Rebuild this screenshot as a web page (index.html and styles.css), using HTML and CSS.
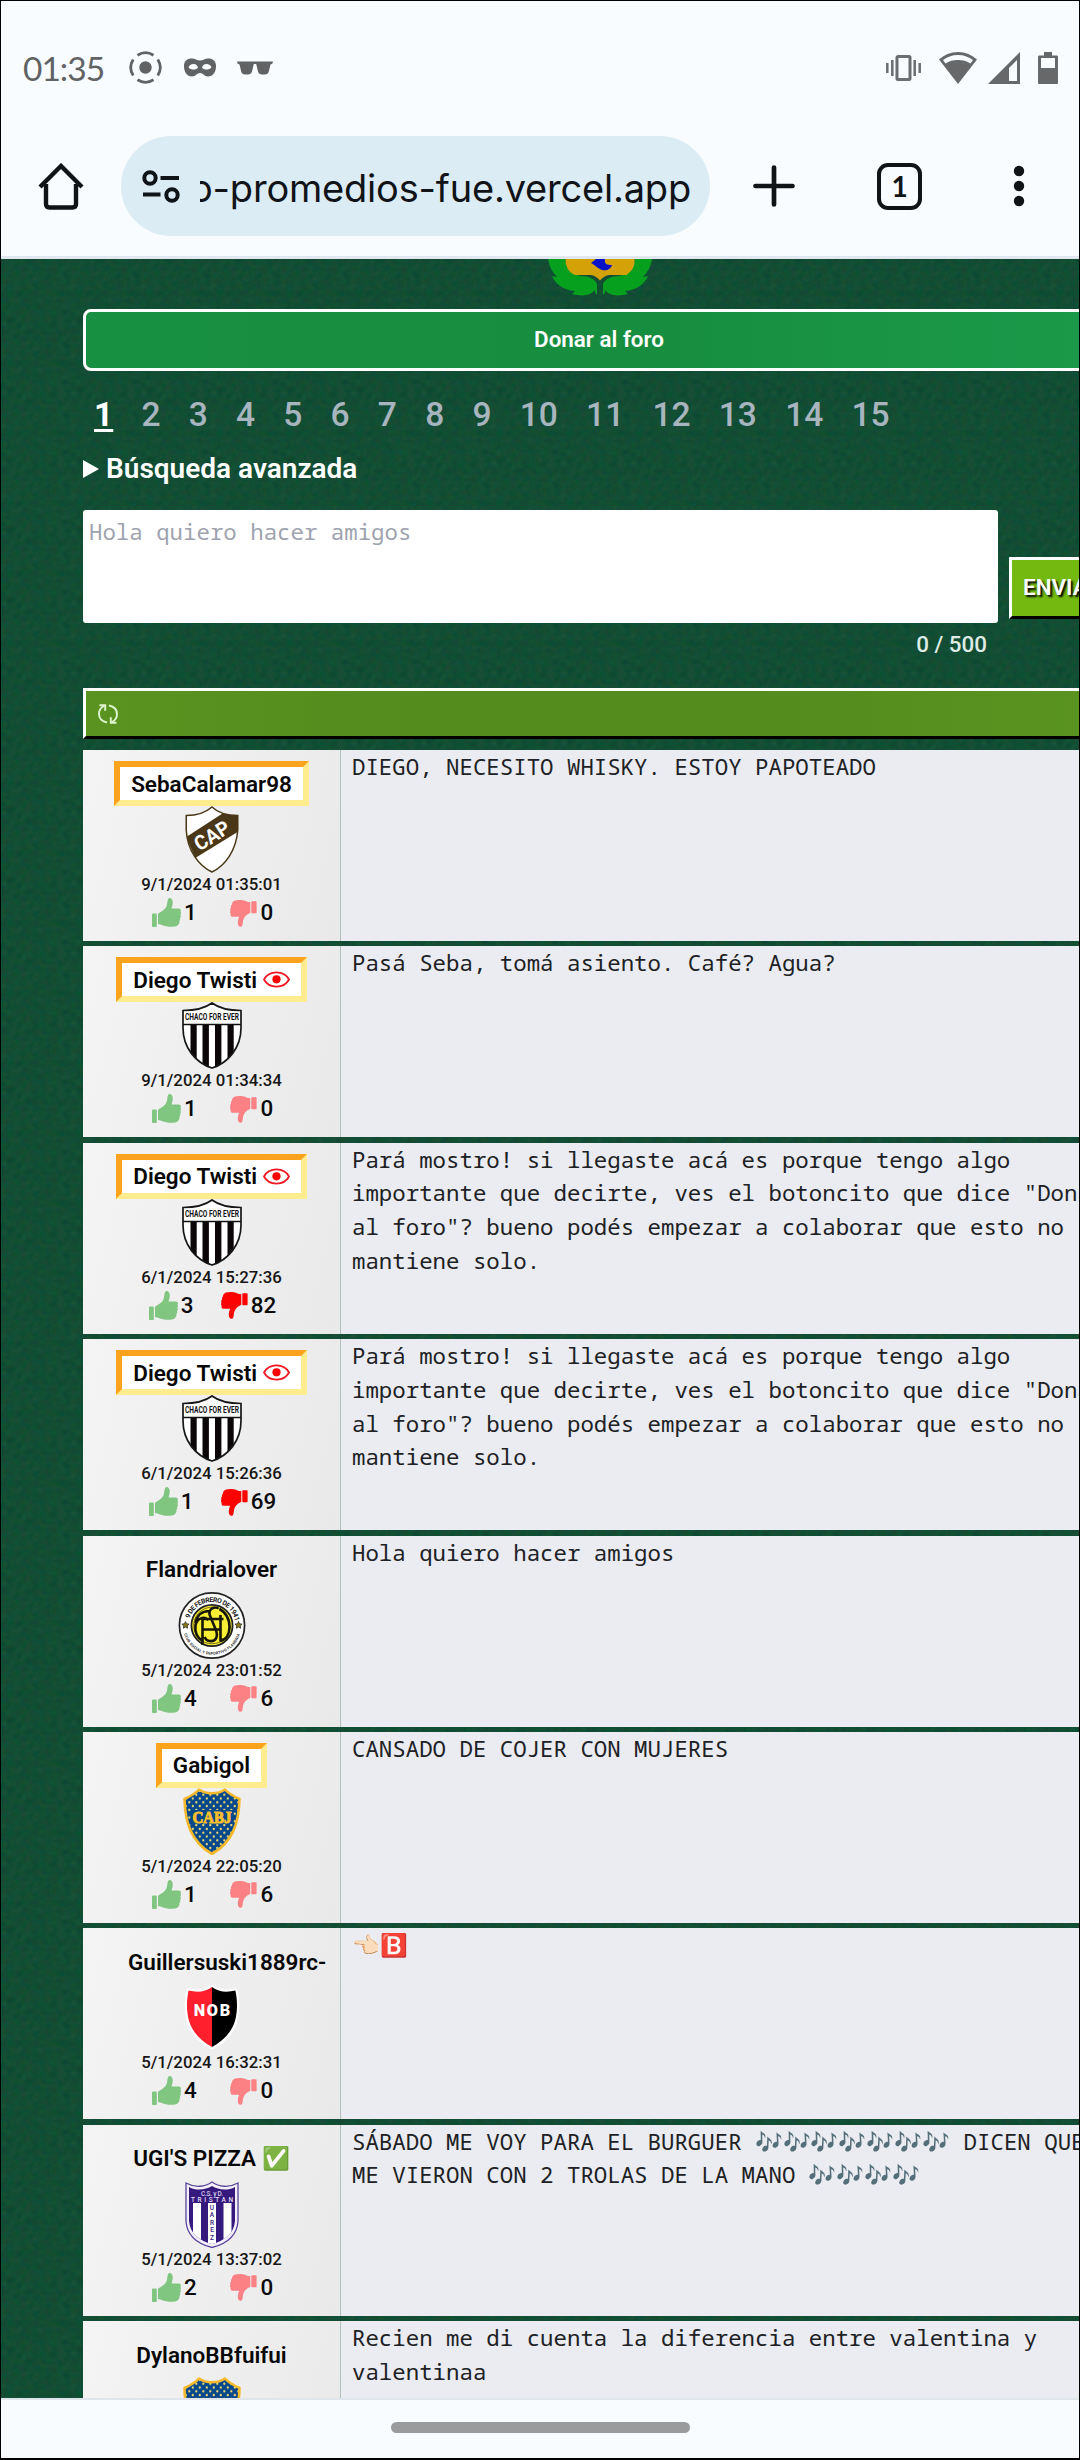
FILE: index.html
```html
<!DOCTYPE html>
<html lang="es">
<head>
<meta charset="utf-8">
<title>Foro promedios</title>
<link rel="stylesheet" href="styles.css">
</head>
<body>
<svg class="defs" aria-hidden="true">
  <defs>
    <pattern id="stars-a" x="1" y="1" width="7" height="7.600" patternUnits="userSpaceOnUse"><rect width="7" height="7.600" fill="#07488a"/><circle cx="1.800" cy="1.900" r="1.150" fill="#ecdb74"/><circle cx="5.300" cy="5.700" r="1.150" fill="#ecdb74"/></pattern>
    <clipPath id="cap-clip"><path d="M26.7 1C20 7 10 9.500 1 9.500V24C2 45 14 60 26.700 66 39.500 60 51 45 52.500 24V9.500C43 9.500 33 7 26.700 1z"/></clipPath>
    <clipPath id="chaco-clip"><path d="M30 1C22 7 12 8.500 1 8.500V26C1 46 14 61 30 66 46 61 59 46 59 26V8.500C48 8.500 38 7 30 1z"/></clipPath>
    <clipPath id="nob-clip"><path d="M27 3C21 8 12 8.500 4 6.500 2 15 1.500 26 4.500 37 8 48 17 57 27 62 37 57 46 48 49.500 37 52.500 26 52 15 50 6.500 42 8.500 33 8 27 3z"/></clipPath>
    <clipPath id="tri-clip"><path d="M27 5C21 9 11 10 4 6V40C5 53 15 60 27 63 39 60 49 53 50 40V6C43 10 33 9 27 5z"/></clipPath>
    <symbol id="crest-cap" viewBox="0 0 53.500 67">
      <g clip-path="url(#cap-clip)"><path fill="#fff" d="M0 0h54v67H0z"/><path fill="#4a3717" d="M1 31 38 7l16-2v20L10 52z"/></g>
      <path d="M26.700 1C20 7 10 9.500 1 9.500V24C2 45 14 60 26.700 66 39.500 60 51 45 52.500 24V9.500C43 9.500 33 7 26.700 1z" fill="none" stroke="#4a3717" stroke-width="1.500"/>
      <text x="27" y="36.500" transform="rotate(-32 27 30)" text-anchor="middle" textLength="38" lengthAdjust="spacingAndGlyphs" class="ct" font-size="20" fill="#fff">CAP</text>
    </symbol>
    <symbol id="crest-chaco" viewBox="0 0 60 67">
      <g clip-path="url(#chaco-clip)"><path fill="#fff" d="M0 0h60v67H0z"/><path d="M8.500 23h6.200v44H8.500zM20.500 23h6.400v44h-6.400zM33 23h6.400v44H33zM45.500 23h6.200v44h-6.200z" fill="#0b0608"/></g>
      <path d="M1 22.500h58" stroke="#111" stroke-width="1.600"/>
      <path d="M30 1C22 7 12 8.500 1 8.500V26C1 46 14 61 30 66 46 61 59 46 59 26V8.500C48 8.500 38 7 30 1z" fill="none" stroke="#161616" stroke-width="1.700"/>
      <text x="30" y="18.300" text-anchor="middle" textLength="54" lengthAdjust="spacingAndGlyphs" class="ct" font-size="9" fill="#111">CHACO FOR EVER</text>
    </symbol>
    <symbol id="crest-flandria" viewBox="0 0 67 67">
      <circle cx="33.500" cy="33.500" r="32.600" fill="#fff" stroke="#222" stroke-width="1.700"/>
      <path id="fl-top" d="M10 33.500a23.500 23.500 0 0 1 47 0" fill="none"/><path id="fl-bot" d="M4.500 37a29.200 29.200 0 0 0 58 0" fill="none"/>
      <text class="ct" font-size="6.800" fill="#222"><textPath href="#fl-top" startOffset="7" textLength="62">9 DE FEBRERO DE 1941</textPath></text>
      <text class="ct" font-size="3.900" fill="#333"><textPath href="#fl-bot" startOffset="5" textLength="74">CLUB SOCIAL Y DEPORTIVO FLANDRIA</textPath></text>
      <circle cx="33.500" cy="33.500" r="20.600" fill="#f8ee35" stroke="#222" stroke-width="1.800"/>
      <circle cx="33.500" cy="33.500" r="18.300" fill="none" stroke="#5b5414" stroke-width=".8"/>
      <path d="M24 53V27h21M24 37.500h18M42 23v26M30 28c-5-4-11-2-13 5-1 8 2 13 7 16M41 49c7-1 10-7 10-14 0-8-4-15-10-18M40 16c-7-2-11 3-8 9l5 12c3 7 1 13-6 12-3 0-4-2-5-4M31 19c-8 0-13 5-14 12" fill="none" stroke="#171608" stroke-width="2.600"/>
      <path d="m7 29.500 1.100 2.300 2.500.3-1.900 1.700.5 2.500L7 35.100l-2.200 1.200.5-2.500-1.900-1.700 2.500-.3zM60 29.500l1.100 2.300 2.500.3-1.900 1.700.5 2.500-2.200-1.200-2.200 1.200.5-2.500-1.900-1.700 2.500-.3z" fill="#8a7a16" stroke="#222" stroke-width=".7"/>
    </symbol>
    <symbol id="crest-boca" viewBox="0 0 58 67">
      <path d="M16 1.500C23 6.500 35 6.500 42 1.500 46 6 51 8.500 56.500 11 56 34 50 54 29 66 8 54 2 34 1.500 11 7 8.500 12 6 16 1.500z" fill="url(#stars-a)" stroke="#f6b92b" stroke-width="2.600" stroke-linejoin="round"/>
      <path d="M8 22h42v14H8z" fill="#07488a"/>
      <text x="29" y="34.500" text-anchor="middle" textLength="39" lengthAdjust="spacingAndGlyphs" class="slab" font-size="16.500" fill="#fbc02d" stroke="#fbc02d" stroke-width="1">CABJ</text>
    </symbol>
    <symbol id="crest-nob" viewBox="0 0 54 66">
      <path d="M27 3C21 8 12 8.500 4 6.500 2 15 1.500 26 4.500 37 8 48 17 57 27 62 37 57 46 48 49.500 37 52.500 26 52 15 50 6.500 42 8.500 33 8 27 3z" fill="#fff" stroke="#fff" stroke-width="4.500" stroke-linejoin="round"/>
      <g clip-path="url(#nob-clip)"><path fill="#ff1f2d" d="M0 0h27v66H0z"/><path d="M27 0h27v66H27z"/></g>
      <text x="27" y="32" text-anchor="middle" textLength="36" class="ct black" font-size="16" fill="#fff">NOB</text>
    </symbol>
    <symbol id="crest-tristan" viewBox="0 0 54 67">
      <path d="M27 1C20 6 10 7 1 2V40C2 56 13 63 27 66.500 41 63 52 56 53 40V2C44 7 34 6 27 1z" fill="#f4f0fa" stroke="#59439a" stroke-width="1.300"/>
      <g clip-path="url(#tri-clip)"><path fill="#35197c" d="M0 0h54v67H0z"/><path d="M8 22h8v45H8zM23 22h8v45h-8zM38.500 22h8v45h-8z" fill="#fff"/></g>
      <text x="27" y="14.500" text-anchor="middle" textLength="22" class="ct light" font-size="6.500" fill="#d8cdee">C.S. y D.</text>
      <text x="27" y="20.700" text-anchor="middle" textLength="42" class="ct light" font-size="6.500" fill="#e6def5">TRISTAN</text>
      <g class="ct light" font-size="6.500" fill="#35197c" text-anchor="middle"><text x="27" y="28.500">U</text><text x="27" y="36">A</text><text x="27" y="43.500">R</text><text x="27" y="51">E</text><text x="27" y="58.500">Z</text></g>
    </symbol>
    <symbol id="up" viewBox="0 0 29 29"><path d="M0 16.500c0-.6.300-.9.900-.9h3c.6 0 .9.300.9.900v11.600c0 .6-.3.900-.9.900H.9c-.6 0-.9-.3-.9-.9zM6 16.800c0-1 .4-1.500 1.400-2 3-1.400 5.700-3.700 7-6.300.9-1.900.8-4.500 1.400-6.700C16.300.2 17.300-.2 18.300.1c1.900.6 2.600 2.900 2.400 5.200-.1 2.100-.9 4-1.200 5.200h7.300c1.800 0 2.600 1.700 1.700 3.200.7.900.7 2.100-.2 3 .8 1 .7 2.400-.3 3.300.5 1.200.2 2.300-.7 3 .6 1.600-.2 3.200-1.700 4.400-1 .9-3.700 1.400-6.200 1.400-4 0-7.300-.7-9-1.500-1.600-.7-2.600-1.200-4.400-1.300z"/></symbol>
    <symbol id="down" viewBox="0 0 27 27"><path d="M22 1.200h3.900c.4 0 .7.300.7.700v10.600c0 .4-.3.700-.7.700H22c-.4 0-.7-.3-.7-.7V1.900c0-.4.300-.7.700-.7zM20.300 12c0 .8-.4 1.200-1.300 1.600-2.500 1.200-4.300 3.200-5.400 5.500-1 2.200-.6 4.800-1.500 7-.6 1.200-2.700.9-3.500-.3-1.300-2-1-4.700.5-9H3C1 16.800.1 15.400.7 13.700-.1 12.800-.2 11.500.5 10.500c-.5-1-.4-2.300.6-3-.4-1.200 0-2.300.9-2.900-.2-1.600 1-3.300 3-4C8-.4 13 0 15.500 1c1.700.8 3 1.200 4.800 1.200z"/></symbol>
    <symbol id="eye" viewBox="0 0 27 17"><path d="M1 8.500C6-1 21-1 26 8.500 21 18 6 18 1 8.500z" fill="#fff" stroke="#f01520" stroke-width="1.700"/><circle cx="13.500" cy="8.300" r="4.100" fill="#fa0000"/></symbol>
  </defs>
</svg>

<header class="chrome">
  <div class="status">
    <span class="clock">01:35</span>
    <svg class="i-rec" viewBox="0 0 33 33" width="33" height="33"><circle cx="16.500" cy="16.500" r="6.200" fill="#606264"/><g fill="none" stroke="#606264" stroke-width="2.800"><path d="M8.500 4.200a15 15 0 0 1 16 0M8.500 28.800a15 15 0 0 0 16 0M4.200 8.500a15 15 0 0 0 0 16M28.800 8.500a15 15 0 0 1 0 16"/></g></svg>
    <svg class="i-mask" viewBox="0 0 32 19" width="32" height="19"><path fill="#606264" fill-rule="evenodd" d="M8 .5c3 0 5 2 8 2s5-2 8-2c5 0 8 2.500 8 7.500 0 6-3 10.500-8 10.500-3.500 0-5-3.500-8-3.500s-4.500 3.500-8 3.500C3 18.500 0 14 0 8 0 3 3 .5 8 .5zM9.500 6C7 6 5 7.500 4.500 9.500 6 11 7.500 11.500 9.500 11.500S13 11 14 9.500C13 7 12 6 9.500 6zm13 0c-2.500 0-3.500 1-4.500 3.500 1 1.500 2.500 2 4.500 2s3.500-.5 5-2C27 7.500 25 6 22.500 6z"/></svg>
    <svg class="i-glasses" viewBox="0 0 36 14" width="36" height="14"><path fill="#606264" d="M0 .5h36l-.5 2-2 1-1.700 7c-.5 2-1.800 3-3.800 3h-3c-2 0-3.500-1-4-3L19.200 3h-2.400L15 10.500c-.5 2-2 3-4 3H8c-2 0-3.300-1-3.800-3l-1.700-7-2-1z"/></svg>
    <svg class="i-vib" viewBox="0 0 35 26" width="35" height="26"><g fill="none" stroke="#6b6d6f"><rect x="11" y="1.600" width="13" height="22.800" rx="1" stroke-width="3"/><path stroke-width="2.500" d="M1.300 8v10M6.300 5v16M28.700 5v16M33.700 8v10"/></g></svg>
    <svg class="i-wifi" viewBox="0 0 38 32" width="38" height="32"><path fill="#66686a" fill-rule="evenodd" d="M19 0c7.500 0 14 3 19 7.500L19 32 0 7.500C5 3 11.500 0 19 0zm0 3C13 3 8 5 4 8l2.500 3.500C10 9 14 8 19 8s9 1 12.500 3.500L34 8c-4-3-9-5-15-5z"/></svg>
    <svg class="i-sig" viewBox="0 0 32 32" width="32" height="32"><path fill="#66686a" fill-rule="evenodd" d="M32 0v32H0zm-3 8-8 8v13h8z"/></svg>
    <svg class="i-bat" viewBox="0 0 20 32" width="20" height="32"><path fill="#66686a" fill-rule="evenodd" d="M6 0h8v3.500h4.500c1 0 1.500.5 1.500 1.500v25.500c0 1-.5 1.500-1.500 1.500h-17C.5 32 0 31.500 0 30.500V5c0-1 .5-1.500 1.500-1.500H6zM3 6v10h14V6z"/></svg>
  </div>
  <div class="toolbar">
    <svg class="home" viewBox="0 0 46 47" width="46" height="47"><path d="M8 21v20q0 3.500 3.500 3.500h23q3.500 0 3.500-3.500V21M2 24 23 3l21 21" fill="none" stroke="#111417" stroke-width="4.400" stroke-linejoin="miter"/></svg>
    <div class="url">
      <svg viewBox="0 0 38 33" width="38" height="33"><g fill="none" stroke="#0f1418" stroke-width="4"><circle cx="8" cy="8" r="5.700"/><circle cx="30" cy="25" r="5.700"/><path d="M18.500 8H37M1 24.500h17.500"/></g></svg>
      <span class="address">o-promedios-fue.vercel.app</span>
    </div>
    <svg class="plus" viewBox="0 0 42 42" width="42" height="42"><path d="M21 2.500v37M2.500 21h37" stroke="#111417" stroke-width="4.700" stroke-linecap="round"/></svg>
    <span class="tabs">1</span>
    <svg class="more" viewBox="0 0 12 42" width="12" height="42"><g fill="#111417"><circle cx="6" cy="6" r="5.200"/><circle cx="6" cy="21" r="5.200"/><circle cx="6" cy="36" r="5.200"/></g></svg>
  </div>
</header>

<main class="page">
  <svg class="logo" viewBox="0 0 104 38" width="104" height="38">
    <path fill="#06a01e" d="M0 0h17l2 8c3 6 8 8 14 9 8 0 14 3 16 8v11c-2-1-2-3-2-5-4 5-11 7-23 4l3-3C16 31 8 26 4 17l5 1C4 13 1 7 0 0zM104 0H87l-2 8c-3 6-8 8-14 9-8 0-14 3-16 8v11c2-1 2-3 2-5 4 5 11 7 23 4l-3-3c11-1 19-6 23-15l-5 1c5-5 8-11 9-18z"/>
    <path fill="#d4a108" d="M17.500 0h69c.5 6-1 11-8 16H64c-6 0-9 2-12 5.500C49 18 46 16 40 16H27c-7-3-9.500-9-9.500-16z"/>
    <path fill="#0712c8" d="M48 0h9c-1 5 2 6 7 6-1 4-5 6-10 5-5-2-7-5-11-7z"/>
  </svg>
  <a class="donate">Donar al foro</a>
  <nav class="pages"><b>1</b><a>2</a><a>3</a><a>4</a><a>5</a><a>6</a><a>7</a><a>8</a><a>9</a><a>10</a><a>11</a><a>12</a><a>13</a><a>14</a><a>15</a></nav>
  <div class="search"><i></i>Búsqueda avanzada</div>
  <form class="compose">
    <div class="field"><div class="box">Hola quiero hacer amigos</div><span class="count">0 / 500</span></div>
    <span class="send">ENVIAR</span>
  </form>
  <div class="refresh"><svg viewBox="0 0 20 20" width="20" height="20"><g fill="none" stroke="#dff5d0" stroke-width="1.900"><path d="M9 18.500C4 17.500 1 14 1 9.800 1 6.500 3 3.500 6 2M11 1.500c5 1 8 4.500 8 8.700 0 3.300-2 6.300-5 7.800"/><path d="M1.500 1.300h5.700v5.500M18.500 18.700h-5.700v-5.500"/></g></svg></div>

  <section class="posts">
    <article class="post"><div class="user"><div class="name vip">SebaCalamar98</div><svg class="crest"><use href="#crest-cap"/></svg><time>9/1/2024 01:35:01</time><div class="votes"><span><svg class="up"><use href="#up"/></svg>1</span><span><svg class="down"><use href="#down"/></svg>0</span></div></div><p>DIEGO, NECESITO WHISKY. ESTOY PAPOTEADO</p></article>
    <article class="post"><div class="user"><div class="name vip">Diego Twisti <svg class="eye"><use href="#eye"/></svg></div><svg class="crest"><use href="#crest-chaco"/></svg><time>9/1/2024 01:34:34</time><div class="votes"><span><svg class="up"><use href="#up"/></svg>1</span><span><svg class="down"><use href="#down"/></svg>0</span></div></div><p>Pasá Seba, tomá asiento. Café? Agua?</p></article>
    <article class="post"><div class="user"><div class="name vip">Diego Twisti <svg class="eye"><use href="#eye"/></svg></div><svg class="crest"><use href="#crest-chaco"/></svg><time>6/1/2024 15:27:36</time><div class="votes"><span><svg class="up"><use href="#up"/></svg>3</span><span><svg class="down on"><use href="#down"/></svg>82</span></div></div><p>Pará mostro! si llegaste acá es porque tengo algo importante que decirte, ves el botoncito que dice "Donar al foro"? bueno podés empezar a colaborar que esto no se mantiene solo.</p></article>
    <article class="post"><div class="user"><div class="name vip">Diego Twisti <svg class="eye"><use href="#eye"/></svg></div><svg class="crest"><use href="#crest-chaco"/></svg><time>6/1/2024 15:26:36</time><div class="votes"><span><svg class="up"><use href="#up"/></svg>1</span><span><svg class="down on"><use href="#down"/></svg>69</span></div></div><p>Pará mostro! si llegaste acá es porque tengo algo importante que decirte, ves el botoncito que dice "Donar al foro"? bueno podés empezar a colaborar que esto no se mantiene solo.</p></article>
    <article class="post"><div class="user"><div class="name">Flandrialover</div><svg class="crest"><use href="#crest-flandria"/></svg><time>5/1/2024 23:01:52</time><div class="votes"><span><svg class="up"><use href="#up"/></svg>4</span><span><svg class="down"><use href="#down"/></svg>6</span></div></div><p>Hola quiero hacer amigos</p></article>
    <article class="post"><div class="user"><div class="name vip">Gabigol</div><svg class="crest"><use href="#crest-boca"/></svg><time>5/1/2024 22:05:20</time><div class="votes"><span><svg class="up"><use href="#up"/></svg>1</span><span><svg class="down"><use href="#down"/></svg>6</span></div></div><p>CANSADO DE COJER CON MUJERES</p></article>
    <article class="post"><div class="user"><div class="name long">Guillersuski1889rc-</div><svg class="crest"><use href="#crest-nob"/></svg><time>5/1/2024 16:32:31</time><div class="votes"><span><svg class="up"><use href="#up"/></svg>4</span><span><svg class="down"><use href="#down"/></svg>0</span></div></div><p>👈🏻🅱️</p></article>
    <article class="post"><div class="user"><div class="name">UGI'S PIZZA ✅</div><svg class="crest"><use href="#crest-tristan"/></svg><time>5/1/2024 13:37:02</time><div class="votes"><span><svg class="up"><use href="#up"/></svg>2</span><span><svg class="down"><use href="#down"/></svg>0</span></div></div><p>SÁBADO ME VOY PARA EL BURGUER 🎶🎶🎶🎶🎶🎶🎶 DICEN QUE ME VIERON CON 2 TROLAS DE LA MANO 🎶🎶🎶🎶</p></article>
    <article class="post"><div class="user"><div class="name">DylanoBBfuifui</div><svg class="crest"><use href="#crest-boca"/></svg></div><p>Recien me di cuenta la diferencia entre valentina y valentinaa</p></article>
  </section>
</main>

<footer class="gesture"><span></span></footer>
</body>
</html>
```

FILE: styles.css
```css
* { box-sizing: border-box; }

body {
  margin: 0;
  width: 1080px;
  height: 2460px;
  overflow: hidden;
  display: flex;
  flex-direction: column;
  border: 1px solid #000;
  border-bottom-width: 2px;
  background: #f8fcff;
  font-family: Roboto, "Liberation Sans", sans-serif;
}

.defs { position: absolute; width: 0; height: 0; }
.ct { font-family: Roboto, sans-serif; font-weight: 700; }
.ct.light { font-weight: 500; }
.ct.black { font-weight: 900; }
.slab { font-family: "Liberation Serif", serif; font-weight: 700; }

/* Browser chrome */
.chrome {
  flex: none;
  height: 258px;
  border-bottom: 3px solid #e0e7ef;
}
.status {
  display: flex;
  align-items: center;
  height: 134px;
  padding: 0 21px 0 22px;
}
.status svg { flex: none; margin-top: -1px; }
.clock {
  width: 106px;
  padding-top: 1px;
  font: 400 33.5px/1 Lato, sans-serif;
  letter-spacing: -1px;
  color: #606264;
}
.i-mask { margin-left: 22px; }
.i-glasses { margin-left: 21px; }
.i-vib { margin-left: auto; }
.i-wifi { margin-left: 18px; }
.i-sig { margin-left: 11px; }
.i-bat { margin-left: 18px; }
.toolbar {
  display: flex;
  align-items: center;
  height: 102px;
  padding-left: 37px;
}
.home { flex: none; margin-right: 37px; }
.url {
  display: flex;
  align-items: center;
  flex: none;
  width: 589px;
  height: 100px;
  padding-left: 21px;
  border-radius: 50px;
  background: #dcecf5;
}
.url svg { flex: none; margin-right: 20px; }
.address {
  display: flex;
  justify-content: flex-end;
  width: 491px;
  overflow: hidden;
  white-space: nowrap;
  padding-top: 3px;
  font: 400 38px/50px Inter, sans-serif;
  letter-spacing: -.2px;
  color: #101418;
}
.plus { flex: none; margin-left: 43px; }
.tabs {
  flex: none;
  width: 45px;
  height: 47px;
  margin: 0 91px 0 82px;
  border: 4.5px solid #111417;
  border-radius: 11px;
  text-align: center;
  font: 700 28px/38px Lato, sans-serif;
  color: #111417;
}
.more { flex: none; }

/* Forum page */
.page {
  flex: 1;
  min-height: 0;
  overflow: hidden;
  padding-left: 82px;
  background-color: #124d34;
  background-image: url("data:image/svg+xml,%3Csvg xmlns='http://www.w3.org/2000/svg' width='70' height='70'%3E%3Cfilter id='n' x='0' y='0' width='100%25' height='100%25' color-interpolation-filters='sRGB'%3E%3CfeTurbulence type='fractalNoise' baseFrequency='.16' numOctaves='3' stitchTiles='stitch'/%3E%3CfeColorMatrix values='.18 0 0 0 -.02 0 .12 0 0 .24 0 0 .12 0 .142 0 0 0 0 1'/%3E%3C/filter%3E%3Crect width='70' height='70' filter='url(%23n)' opacity='.6'/%3E%3C/svg%3E");
}
.page > * { width: 1032px; }
.page > .logo { display: block; width: 104px; margin-left: 465px; }
.donate {
  display: block;
  height: 62px;
  margin-top: 12px;
  border: 3px solid #fff;
  border-radius: 8px;
  background: linear-gradient(90deg, #189042, #178e3f 55%, #1b9a4a);
  color: #fff;
  text-align: center;
  font: 600 22.4px/54px Roboto, sans-serif;
}
.pages {
  display: flex;
  gap: 28.2px;
  margin-top: 24px;
  padding-left: 11px;
  font: 500 33.6px/40px Roboto, sans-serif;
  color: #a8b5bf;
}
.pages b {
  color: #fff;
  font-weight: 700;
  text-decoration: underline;
  text-decoration-thickness: 3px;
  text-underline-offset: 3px;
  text-decoration-skip-ink: none;
}
.search {
  display: flex;
  align-items: center;
  height: 40px;
  margin-top: 14px;
  color: #fff;
  font: 600 28px/40px Roboto, sans-serif;
}
.search i {
  margin-right: 7px;
  border-left: 16px solid #fff;
  border-top: 9px solid transparent;
  border-bottom: 9px solid transparent;
}
.compose {
  display: flex;
  gap: 11px;
  height: 160px;
  margin: 21px 0 0;
}
.field { flex: none; width: 915px; }
.box {
  height: 113px;
  padding: 5px 6px;
  border-radius: 3px;
  background: #fff;
  color: #9ea3af;
  font: 22.4px/34px "Noto Sans Mono", "DejaVu Sans Mono", monospace;
}
.count {
  display: block;
  padding: 8px 11px 0;
  text-align: right;
  color: #dfece5;
  font: 500 22.4px/26px Roboto, sans-serif;
}
.send {
  flex: none;
  width: 120px;
  height: 62px;
  margin-top: 47px;
  padding-left: 11px;
  border: 3px solid;
  border-color: #fff #000 #000 #fff;
  background: #73b90f;
  color: #fff;
  font: 600 22.4px/55px Roboto, sans-serif;
  text-shadow: 2px 2px 2px #000;
}
.refresh {
  display: flex;
  align-items: center;
  height: 51px;
  margin-top: 18px;
  padding-left: 12px;
  border: 3px solid;
  border-color: #fff #000 #000 #fff;
  background: linear-gradient(90deg, #5a931f, #548c1e 35%, #548c1e 65%, #5a941f);
}
.posts {
  display: grid;
  gap: 5.4px;
  margin-top: 11px;
}
.post {
  display: grid;
  grid-template-columns: 258px 1fr;
  height: 191px;
  background: #eaecf1;
}
.user {
  display: flex;
  flex-direction: column;
  align-items: center;
  padding-top: 11px;
  border-right: 1px solid #b0c0bd;
  background: linear-gradient(105deg, #f4f4f4, #e9e9e9);
}
.name {
  display: flex;
  align-items: center;
  justify-content: center;
  height: 45px;
  white-space: pre;
  font-weight: 600;
  font-size: 22.5px;
  color: #080808;
}
.name.long { align-self: flex-start; margin-left: 45px; }
.name.vip {
  padding: 0 11px;
  border: 6px solid;
  border-color: #fba31c #ffec8f #ffec8f #fba31c;
  background: #fff;
}
.eye { width: 27px; height: 17px; }
.crest { width: 68px; height: 67px; }
.user time {
  height: 22px;
  font: 500 16.8px/22px Roboto, sans-serif;
  color: #161616;
}
.votes {
  display: flex;
  justify-content: space-around;
  width: 155px;
  margin: 2px 0 0 2px;
  color: #0b0b0b;
  font-weight: 500;
  font-size: 22.4px;
  line-height: 31px;
}
.votes span { display: flex; align-items: center; gap: 3px; }
.up { width: 29px; height: 29px; fill: #80c580; }
.down { width: 27px; height: 27px; margin-top: 1px; fill: #fb8185; }
.down.on { fill: #fc0303; }
.post p {
  margin: 0;
  padding: 0 7px 0 11px;
  font: 22.4px/33.7px "Noto Sans Mono", "DejaVu Sans Mono", "Noto Color Emoji", monospace;
  color: #202124;
}

/* Gesture bar */
.gesture {
  flex: none;
  display: flex;
  justify-content: center;
  height: 60px;
  padding-top: 22px;
  border-top: 2px solid #dfe5ea;
}
.gesture span {
  width: 299px;
  height: 11px;
  border-radius: 6px;
  background: #9a9b9d;
}
```
